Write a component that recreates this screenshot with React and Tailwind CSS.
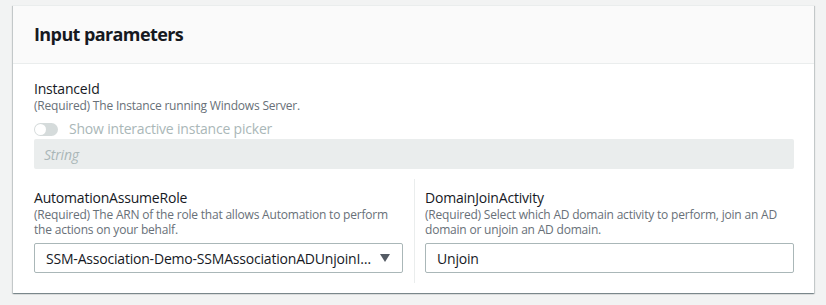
import React from 'react';

const font = { fontFamily: '"Open Sans", "Noto Sans", Arial, sans-serif' };

export default function App() {
  return (
    <div className="h-[305px] w-[826px] bg-[#f2f3f3] pt-[5px] pl-[13px]" style={font}>
      <div className="w-[801px] bg-white border-t border-[#eaeded] shadow-[0_1px_1px_0_rgba(0,28,36,0.3),1px_1px_1px_0_rgba(0,28,36,0.15),-1px_1px_1px_0_rgba(0,28,36,0.15)]">
        <div className="h-[58px] bg-[#fafafa] border-b border-[#eaeded] pl-[21px] pr-[20px] pt-[17px]">
          <h2 className="text-[18px] leading-[22px] font-bold tracking-[-0.6px] text-[#16191f]">Input parameters</h2>
        </div>

        <div className="pl-[21px] pr-[20px] pt-[16px] pb-[10px] tracking-[-0.2px]">
          <div className="text-[14px] leading-[18px] text-[#16191f]">InstanceId</div>
          <div className="text-[12px] leading-[15px] text-[#687078]">(Required) The Instance running Windows Server.</div>
          <div className="mt-[6px] flex h-[20px] items-center gap-[11px]">
            <span className="flex h-[13px] w-[24px] items-center rounded-full bg-[#d5dbdb] pl-[1px]">
              <span className="h-[11px] w-[11px] rounded-full bg-white" />
            </span>
            <span className="text-[14px] leading-[20px] text-[#aab7b8]">Show interactive instance picker</span>
          </div>
          <div className="flex h-[30px] items-center rounded-[2px] bg-[#eaeded] px-[10px] text-[14px] italic text-[#aab7b8]">
            String
          </div>

          <div className="mt-[10px] grid grid-cols-2">
            <div className="pt-[10px] pb-[10px] pr-[11px]">
              <div className="text-[14px] leading-[18px] text-[#16191f]">AutomationAssumeRole</div>
              <div className="text-[12px] leading-[15px] text-[#687078]">
                (Required) The ARN of the role that allows Automation to perform the actions on your behalf.
              </div>
              <div className="mt-[6px] flex h-[30px] items-center rounded-[2px] border border-[#aab7b8] pl-[11px] pr-[12px]">
                <span className="min-w-0 flex-1 truncate text-[14px] text-[#16191f]">
                  SSM-Association-Demo-SSMAssociationADUnjoinInstanceRole
                </span>
                <svg width="10" height="8" viewBox="0 0 10 8" className="ml-[5px] shrink-0">
                  <path d="M0 0 H10 L5 8 Z" fill="#545b64" />
                </svg>
              </div>
            </div>
            <div className="border-l border-[#eaeded] pt-[10px] pb-[10px] pl-[10px]">
              <div className="text-[14px] leading-[18px] text-[#16191f]">DomainJoinActivity</div>
              <div className="text-[12px] leading-[15px] text-[#687078]">
                (Required) Select which AD domain activity to perform, join an AD domain or unjoin an AD domain.
              </div>
              <div className="mt-[6px] flex h-[30px] items-center rounded-[2px] border border-[#aab7b8] px-[11px] text-[14px] text-[#16191f]">
                Unjoin
              </div>
            </div>
          </div>
        </div>
      </div>
    </div>
  );
}
